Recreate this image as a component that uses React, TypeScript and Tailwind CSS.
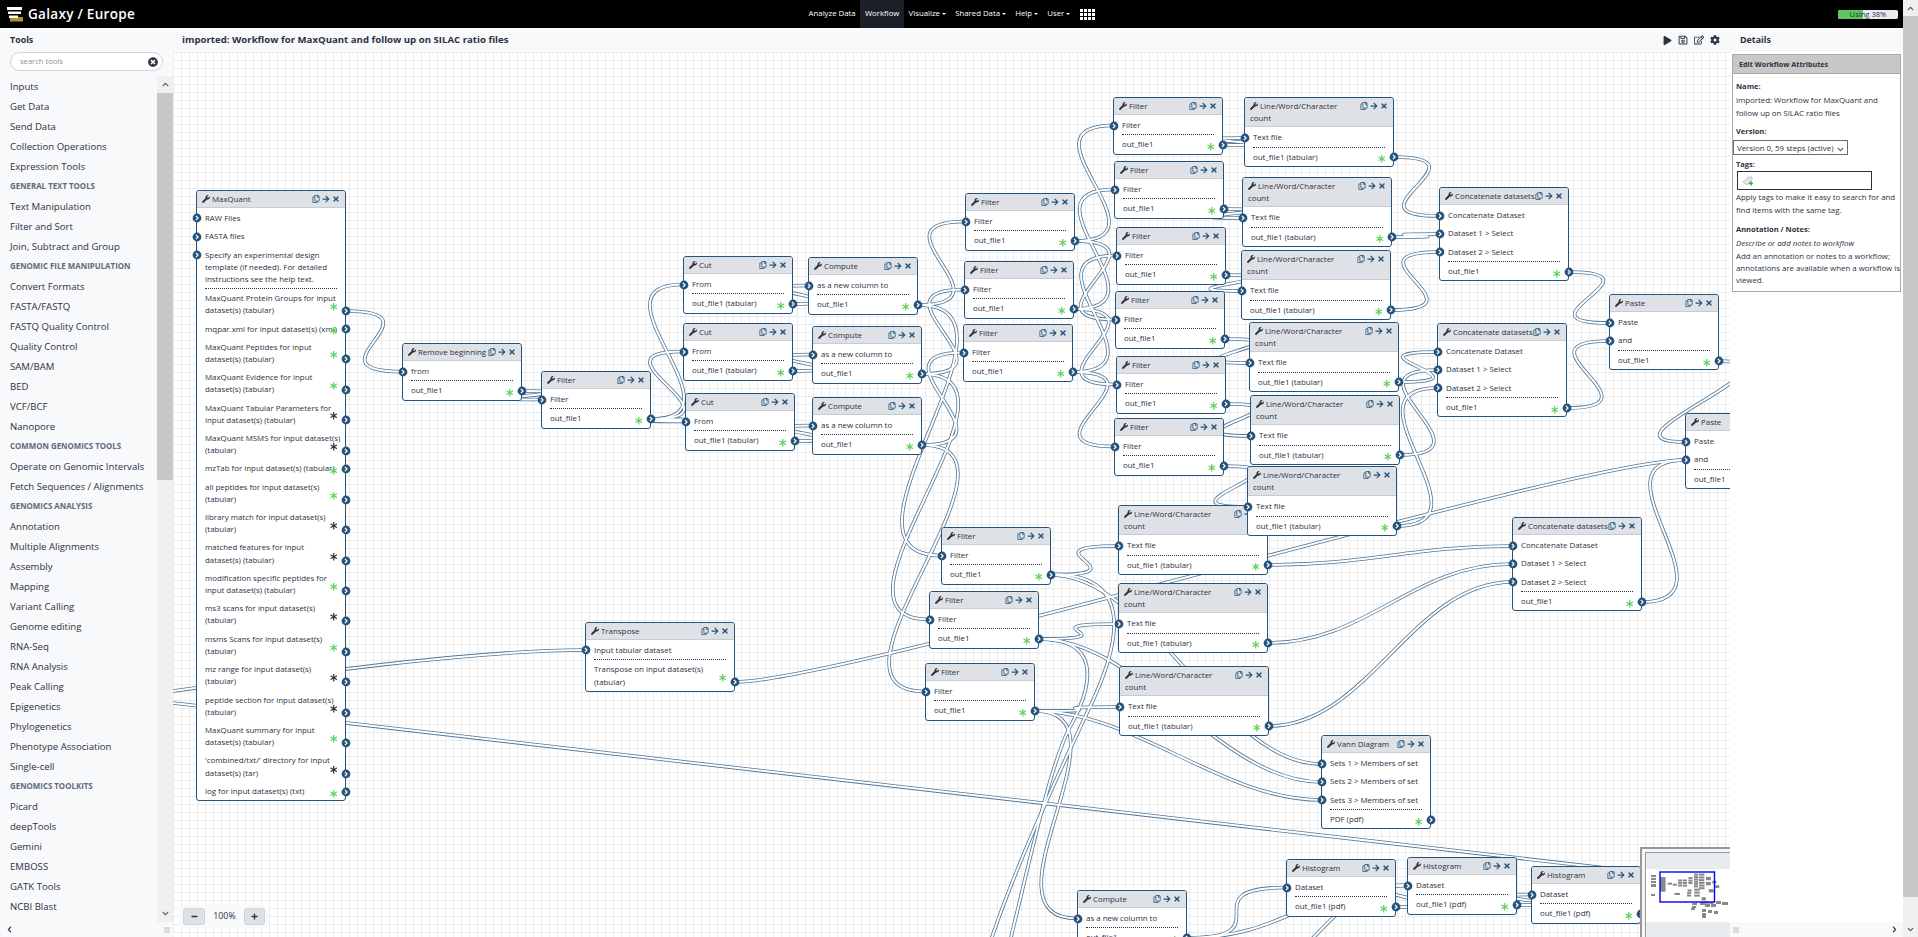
import React from 'react';
import {
  FaWrench, FaRegCopy, FaArrowRight, FaTimes, FaAsterisk, FaPlay, FaRegSave, FaRegEdit, FaCog,
  FaTimesCircle, FaChevronUp, FaChevronDown, FaChevronLeft, FaChevronRight, FaMinus, FaPlus,
} from 'react-icons/fa';

type Out = { label: string; y: number; dark?: boolean };
type Inp = { label: string; y: number };
type WfNode = { id: string; title: string; x: number; y: number; w: number; inputs: Inp[]; outputs: Out[]; minH?: number };

const single = (id: string, title: string, x: number, y: number, input: string, output: string, w = 110): WfNode => ({
  id, title, x, y, w, inputs: [{ label: input, y: y + 28.5 }], outputs: [{ label: output, y: y + 48 }],
});
const filter = (id: string, x: number, y: number) => single(id, 'Filter', x, y, 'Filter', 'out_file1');
const cut = (id: string, x: number, y: number) => single(id, 'Cut', x, y, 'From', 'out_file1 (tabular)');
const compute = (id: string, x: number, y: number) => single(id, 'Compute', x, y, 'as a new column to', 'out_file1');
const hist = (id: string, x: number, y: number) => single(id, 'Histogram', x, y, 'Dataset', 'out_file1 (pdf)');
const lineCount = (id: string, x: number, y: number): WfNode => ({
  id, title: 'Line/Word/Character\ncount', x, y, w: 150,
  inputs: [{ label: 'Text file', y: y + 41 }], outputs: [{ label: 'out_file1 (tabular)', y: y + 60 }],
});
const multi = (id: string, title: string, x: number, y: number, w: number, labels: string[], output: string): WfNode => ({
  id, title, x, y, w,
  inputs: labels.map((label, i) => ({ label, y: y + 29 + i * 18 })),
  outputs: [{ label: output, y: y + 29 + labels.length * 18 + 2 }],
});
const concat = (id: string, x: number, y: number) =>
  multi(id, 'Concatenate datasets', x, y, 130, ['Concatenate Dataset', 'Dataset 1 > Select', 'Dataset 2 > Select'], 'out_file1');

const mqOut: [string, number, boolean?][] = [
  ['MaxQuant Protein Groups for input\ndataset(s) (tabular)', 311],
  ['mqpar.xml for input dataset(s) (xml)', 329],
  ['MaxQuant Peptides for input\ndataset(s) (tabular)', 359],
  ['MaxQuant Evidence for input\ndataset(s) (tabular)', 390],
  ['MaxQuant Tabular Parameters for\ninput dataset(s) (tabular)', 420, true],
  ['MaxQuant MSMS for input dataset(s)\n(tabular)', 451, true],
  ['mzTab for input dataset(s) (tabular)', 469],
  ['all peptides for input dataset(s)\n(tabular)', 500],
  ['library match for input dataset(s)\n(tabular)', 530, true],
  ['matched features for input\ndataset(s) (tabular)', 561, true],
  ['modification specific peptides for\ninput dataset(s) (tabular)', 591],
  ['ms3 scans for input dataset(s)\n(tabular)', 621, true],
  ['msms Scans for input dataset(s)\n(tabular)', 652],
  ['mz range for input dataset(s)\n(tabular)', 682, true],
  ['peptide section for input dataset(s)\n(tabular)', 713, true],
  ['MaxQuant summary for input\ndataset(s) (tabular)', 743],
  ["'combined/txt/' directory for input\ndataset(s) (tar)", 774, true],
  ['log for input dataset(s) (txt)', 792],
];

// later entries sit on top of earlier ones
const nodes: WfNode[] = [
  {
    id: 'mq', title: 'MaxQuant', x: 196, y: 190, w: 150,
    inputs: [
      { label: 'RAW Files', y: 218 },
      { label: 'FASTA files', y: 237 },
      { label: 'Specify an experimental design\ntemplate (if needed). For detailed\ninstructions see the help text.', y: 255 },
    ],
    outputs: mqOut.map(([label, y, dark]) => ({ label, y, dark })),
  },
  single('rb', 'Remove beginning', 402, 343, 'from', 'out_file1', 120),
  filter('f0', 541, 371),
  cut('cut1', 683, 256), cut('cut2', 683, 323), cut('cut3', 685, 393),
  compute('c1', 808, 257), compute('c2', 812, 326), compute('c3', 812, 397),
  filter('fa', 965, 193), filter('fb', 964, 261), filter('fc', 963, 324),
  filter('g1', 1113, 97), filter('g2', 1114, 161), filter('g3', 1116, 227),
  filter('g4', 1115, 291), filter('g5', 1116, 356), filter('g6', 1114, 418),
  lineCount('ld', 1118, 505), lineCount('le', 1118, 583), lineCount('lf', 1119, 666),
  lineCount('l1', 1244, 97), lineCount('l2', 1242, 177), lineCount('l3', 1241, 250),
  lineCount('l4', 1249, 322), lineCount('l5', 1250, 395), lineCount('l6', 1247, 466),
  concat('cc1', 1439, 187), concat('cc2', 1437, 323), concat('cc3', 1512, 517),
  multi('p1', 'Paste', 1609, 294, 110, ['Paste', 'and'], 'out_file1'),
  multi('p2', 'Paste', 1685, 413, 110, ['Paste', 'and'], 'out_file1'),
  {
    id: 'tr', title: 'Transpose', x: 585, y: 622, w: 150,
    inputs: [{ label: 'Input tabular dataset', y: 650 }],
    outputs: [{ label: 'Transpose on input dataset(s)\n(tabular)', y: 682 }],
  },
  filter('fd', 941, 527), filter('fe', 929, 591), filter('ff', 925, 663),
  multi('venn', 'Vann Diagram', 1321, 735, 110, ['Sets 1 > Members of set', 'Sets 2 > Members of set', 'Sets 3 > Members of set'], 'PDF (pdf)'),
  compute('cb', 1077, 890),
  hist('h1', 1286, 859), hist('h2', 1407, 857), hist('h3', 1531, 866),
];

const byId = (id: string) => nodes.find((n) => n.id === id) as WfNode;

// from, output index, to, input index
const edges: [string, number, string, number][] = [
  ['mq', 0, 'rb', 0], ['rb', 0, 'f0', 0],
  ['f0', 0, 'cut1', 0], ['f0', 0, 'cut2', 0], ['f0', 0, 'cut3', 0],
  ['cut1', 0, 'c1', 0], ['cut2', 0, 'c2', 0], ['cut3', 0, 'c3', 0],
  ['c1', 0, 'fa', 0], ['c2', 0, 'fb', 0], ['c3', 0, 'fc', 0],
  ['c1', 0, 'fd', 0], ['c2', 0, 'fe', 0], ['c3', 0, 'ff', 0],
  ['fa', 0, 'g1', 0], ['fa', 0, 'g4', 0], ['fb', 0, 'g2', 0], ['fb', 0, 'g5', 0], ['fc', 0, 'g3', 0], ['fc', 0, 'g6', 0],
  ['g1', 0, 'l1', 0], ['g2', 0, 'l2', 0], ['g3', 0, 'l3', 0], ['g4', 0, 'l4', 0], ['g5', 0, 'l5', 0], ['g6', 0, 'l6', 0],
  ['l1', 0, 'cc1', 0], ['l2', 0, 'cc1', 1], ['l3', 0, 'cc1', 2],
  ['l4', 0, 'cc2', 0], ['l5', 0, 'cc2', 1], ['l6', 0, 'cc2', 2],
  ['cc1', 0, 'p1', 0], ['cc2', 0, 'p1', 1], ['p1', 0, 'p2', 0], ['cc3', 0, 'p2', 1],
  ['tr', 0, 'p2', 1],
  ['fd', 0, 'ld', 0], ['fe', 0, 'le', 0], ['ff', 0, 'lf', 0],
  ['fd', 0, 'venn', 0], ['fe', 0, 'venn', 1], ['ff', 0, 'venn', 2],
  ['ld', 0, 'cc3', 0], ['le', 0, 'cc3', 1], ['lf', 0, 'cc3', 2],
  ['ff', 0, 'cb', 0],
  ['cb', 0, 'h1', 0], ['cb', 0, 'h2', 0], ['h1', 0, 'h2', 0], ['h2', 0, 'h3', 0],
];

// connectors whose other end is off the visible canvas
const rawPaths = [
  'M173 691 C300 674 480 650 585 650',
  'M173 703 L1640 872',
  'M1051 574 C1140 574 1118 650 1087 713 C1060 770 1018 860 992 937 L970 1000',
  'M1040 639 C1098 639 1096 680 1070 727 C1050 765 1030 860 1011 937 L990 1000',
  'M1300 950 C1330 925 1350 885 1407 885',
];

const edgePath = ([from, oi, to, ii]: [string, number, string, number]) => {
  const a = byId(from);
  const b = byId(to);
  const x1 = a.x + a.w;
  const y1 = a.outputs[oi].y;
  const x2 = b.x;
  const y2 = b.inputs[ii].y;
  const cp = Math.min(Math.max(Math.abs(y2 - y1) / 2, 100), 300);
  return `M${x1} ${y1} C${x1 + cp} ${y1} ${x2 - cp} ${y2} ${x2} ${y2}`;
};

const allPaths = [...edges.map(edgePath), ...rawPaths];

const Terminal = ({ x, y }: { x: number; y: number }) => (
  <svg width="10" height="10" viewBox="0 0 10 10" className="absolute" style={{ left: x - 5, top: y - 5 }}>
    <circle cx="5" cy="5" r="4.4" fill="#25537b" />
    <path d="M3.9 2.9 L6 5 L3.9 7.1" fill="none" stroke="#fff" strokeWidth="1.3" />
  </svg>
);

const NodeCard = ({ node }: { node: WfNode }) => (
  <div
    className="absolute rounded-[3px] border border-[#25537b] bg-white text-[#2c3143] text-[7.9px] leading-[12.2px]"
    style={{ left: node.x, top: node.y, width: node.w }}
  >
    <div className="flex justify-between rounded-t-[3px] border-b border-[#c6ccd2] bg-[#dee2e6] pl-[5px] pr-[5px] pt-[2px] pb-[2px]">
      <div className="whitespace-pre">
        <FaWrench className="mr-[2px] inline-block align-[-1px] text-[8px]" />
        {node.title}
      </div>
      <div className="flex h-[12px] items-center gap-[2px] text-[#25537b]">
        <FaRegCopy className="text-[8px]" />
        <FaArrowRight className="text-[8px]" />
        <FaTimes className="text-[8px]" />
      </div>
    </div>
    <div className="pt-[1px]">
      {node.inputs.map((inp) => (
        <div key={inp.label} className="whitespace-pre px-[8px] py-[3px]">
          {inp.label}
        </div>
      ))}
      <div className="mx-[8px] border-t border-dotted border-[#2c3143]" />
      {node.outputs.map((out) => (
        <div key={out.label} className="whitespace-pre px-[8px] py-[3px]">
          {out.label}
        </div>
      ))}
    </div>
    {node.inputs.map((inp) => (
      <Terminal key={inp.label} x={-0.5} y={inp.y - node.y - 1} />
    ))}
    {node.outputs.map((out) => (
      <React.Fragment key={out.label}>
        <FaAsterisk
          className={out.dark ? 'absolute text-[7.5px] text-[#2c3143]' : 'absolute text-[7.5px] text-[#5dd05d]'}
          style={{ right: 8, top: out.y - node.y - 4 + (out.label.includes('\n') ? -5 : 1) }}
        />
        <Terminal x={node.w - 1.5} y={out.y - node.y - 1} />
      </React.Fragment>
    ))}
  </div>
);

// overview blocks for nodes outside the visible part of the canvas
const miniExtras = [
  [1651, 875, 5, 2], [1651, 878, 5, 2], [1651, 881, 5, 2], [1651, 884, 5, 3], [1651, 894, 4, 2],
  [1692, 903, 5, 2], [1692, 906, 4, 2], [1691, 908, 4, 2], [1700, 902, 5, 3], [1705, 904, 5, 3],
  [1711, 904, 5, 3], [1702, 909, 4, 3], [1708, 910, 4, 3], [1714, 911, 4, 3], [1702, 913, 4, 3],
  [1702, 916, 4, 2], [1716, 901, 5, 3], [1722, 902, 6, 3],
];

const Overview = () => (
  <div className="absolute left-[1467px] top-[795px] h-[90px] w-[90px] border-l-2 border-t-2 border-[#999] bg-[#f5f5f5] pl-[3px] pt-[3px]">
    <div className="flex h-full flex-col border-l border-t border-[#999] bg-white">
      <div className="h-[16px] bg-[#e9ecef]" />
      <svg className="h-[53px] w-full" viewBox="1646 869 84 53">
        {nodes.map((n) => (
          <rect
            key={n.id}
            x={1660 + (n.x - 196) / 27}
            y={877 + (n.y - 190) / 27}
            width={n.w / 27}
            height={Math.max((n.outputs.length * 18 + n.inputs.length * 18 + 18) / 27, 2)}
            fill="#888"
          />
        ))}
        {miniExtras.map(([x, y, w, h], i) => (
          <rect key={i} x={x} y={y} width={w} height={h} fill="#888" />
        ))}
        <rect x="1660" y="872" width="54.5" height="30" fill="none" stroke="#0000ff" strokeWidth="1.4" />
      </svg>
      <div className="flex-1 bg-[#e9ecef]" />
    </div>
  </div>
);

const sidebar: [string, boolean?][] = [
  ['Inputs'], ['Get Data'], ['Send Data'], ['Collection Operations'], ['Expression Tools'],
  ['General Text Tools', true], ['Text Manipulation'], ['Filter and Sort'], ['Join, Subtract and Group'],
  ['Genomic File Manipulation', true], ['Convert Formats'], ['FASTA/FASTQ'], ['FASTQ Quality Control'], ['Quality Control'],
  ['SAM/BAM'], ['BED'], ['VCF/BCF'], ['Nanopore'],
  ['Common Genomics Tools', true], ['Operate on Genomic Intervals'], ['Fetch Sequences / Alignments'],
  ['Genomics Analysis', true], ['Annotation'], ['Multiple Alignments'], ['Assembly'], ['Mapping'], ['Variant Calling'],
  ['Genome editing'], ['RNA-Seq'], ['RNA Analysis'], ['Peak Calling'], ['Epigenetics'], ['Phylogenetics'],
  ['Phenotype Association'], ['Single-cell'],
  ['Genomics Toolkits', true], ['Picard'], ['deepTools'], ['Gemini'], ['EMBOSS'], ['GATK Tools'], ['NCBI Blast'],
];

const Caret = () => <span className="ml-[2px] inline-block border-x-[2px] border-t-[2px] border-x-transparent border-t-white align-middle" />;

const NavItem = ({ label, menu, active }: { label: string; menu?: boolean; active?: boolean }) => (
  <div className={active ? 'flex h-full items-center bg-[#1b1f28] px-[4.6px]' : 'flex h-full items-center px-[4.6px]'}>
    {label}
    {menu && <Caret />}
  </div>
);

const Logo = () => (
  <svg width="16" height="15" viewBox="0 0 16 15">
    <rect x="3" y="10" width="13" height="4.5" fill="#a8972f" />
    <rect x="0" y="0" width="15" height="3" fill="#fff" />
    <rect x="1" y="4.5" width="13" height="2.5" fill="#fff" />
    <rect x="2" y="8.5" width="9" height="2.5" fill="#fff" />
  </svg>
);

const AppsGrid = () => (
  <div className="grid grid-cols-4 gap-[1px]">
    {Array.from({ length: 12 }).map((_, i) => (
      <div key={i} className="h-[3px] w-[3px] bg-white" />
    ))}
  </div>
);

export default function App() {
  return (
    <div className="flex h-[937px] w-[1918px] overflow-hidden bg-white font-['Open_Sans',sans-serif] text-[#2c3143]">
      <div className="flex w-[1903px] flex-col">
        <header className="flex h-[28px] items-center bg-black text-white">
          <div className="flex w-[804px] items-center pl-[7px]">
            <Logo />
            <span className="ml-[5px] text-[13.5px] font-semibold tracking-[0.3px]">Galaxy / Europe</span>
          </div>
          <nav className="flex h-full items-center text-[7.8px]">
            <NavItem label="Analyze Data" />
            <NavItem label="Workflow" active />
            <NavItem label="Visualize" menu />
            <NavItem label="Shared Data" menu />
            <NavItem label="Help" menu />
            <NavItem label="User" menu />
            <div className="ml-[5px]">
              <AppsGrid />
            </div>
          </nav>
          <div className="relative ml-auto mr-[5px] h-[9px] w-[60px] overflow-hidden rounded-[2px] bg-[#e9ecef]">
            <div className="h-full w-[42%] bg-[#5cc85c]" />
            <div className="absolute inset-0 text-center text-[7.6px] leading-[9px] text-[#2c3143]">Using 38%</div>
          </div>
        </header>

        <div className="flex min-h-0 flex-1">
          {/* tools */}
          <aside className="flex w-[173px] flex-col bg-[#f8f9fa]">
            <div className="flex h-[24px] items-center pl-[10px] text-[8.9px] font-bold">Tools</div>
            <div className="px-[10px]">
              <div className="flex h-[19px] w-[153px] items-center justify-between rounded-full border border-[#ced4da] bg-white pl-[9px] pr-[4px] text-[7.6px] text-[#8a9099]">
                search tools
                <FaTimesCircle className="text-[10px] text-[#2c3143]" />
              </div>
            </div>
            <div className="mt-[5px] flex min-h-0 flex-1">
              <div className="flex-1 overflow-hidden pt-[1px]">
                {sidebar.map(([label, section]) => (
                  <div
                    key={label}
                    className={
                      section
                        ? 'flex h-[20px] items-center whitespace-nowrap pl-[10px] text-[7.9px] font-bold uppercase text-[#5f6a7d]'
                        : 'flex h-[20px] items-center whitespace-nowrap pl-[10px] text-[9.6px]'
                    }
                  >
                    {label}
                  </div>
                ))}
              </div>
              <div className="flex w-[16px] flex-col bg-[#f0f0f0]">
                <div className="flex h-[17px] items-center justify-center text-[#505050]">
                  <FaChevronUp className="text-[7px]" />
                </div>
                <div className="h-[387px] bg-[#c8c8c8]" />
                <div className="flex-1" />
                <div className="flex h-[17px] items-center justify-center text-[#505050]">
                  <FaChevronDown className="text-[7px]" />
                </div>
              </div>
            </div>
            <div className="flex h-[15px] items-center justify-between pl-[6px] pr-[3px]">
              <FaChevronLeft className="text-[7px]" />
              <div className="h-[6px] w-[6px] bg-[#dcdcdc]" />
            </div>
          </aside>

          {/* workflow canvas */}
          <main className="flex w-[1557px] flex-col">
            <div className="flex h-[24px] items-center justify-between bg-[#f8f9fa] pl-[9px] pr-[10px]">
              <div className="text-[9.65px] font-bold">imported: Workflow for MaxQuant and follow up on SILAC ratio files</div>
              <div className="flex items-center gap-[6px] text-[10px]">
                <FaPlay className="text-[9px]" />
                <FaRegSave />
                <FaRegEdit />
                <FaCog />
              </div>
            </div>
            <div className="relative flex-1 overflow-hidden bg-white bg-[linear-gradient(to_right,#ececec_1px,transparent_1px),linear-gradient(to_bottom,#ececec_1px,transparent_1px)] bg-[size:8px_8px]">
              <div className="absolute left-[-173px] top-[-52px]">
                <svg className="absolute left-0 top-0" width="1918" height="1000" fill="none">
                  {allPaths.map((d, i) => (
                    <path key={`o${i}`} d={d} stroke="#4f7698" strokeWidth="3.6" />
                  ))}
                  {allPaths.map((d, i) => (
                    <path key={`i${i}`} d={d} stroke="#fff" strokeWidth="2" />
                  ))}
                </svg>
                {nodes.map((n) => (
                  <NodeCard key={n.id} node={n} />
                ))}
              </div>
              <div className="absolute bottom-[9px] left-[7px] flex h-[23px] w-[88px] items-center justify-between rounded-[3px] bg-[#f8f9fa] px-[3px] text-[8.8px]">
                <div className="flex h-[17px] w-[22px] items-center justify-center rounded-[3px] border border-[#ced4da] bg-[#dee2e6]">
                  <FaMinus className="text-[7px]" />
                </div>
                100%
                <div className="flex h-[17px] w-[21px] items-center justify-center rounded-[3px] border border-[#ced4da] bg-[#dee2e6]">
                  <FaPlus className="text-[7px]" />
                </div>
              </div>
              <Overview />
            </div>
          </main>

          {/* details */}
          <aside className="flex w-[173px] flex-col bg-white">
            <div className="flex h-[24px] items-center bg-[#f8f9fa] pl-[10px] text-[8.9px] font-bold">Details</div>
            <div className="flex-1 pl-[2px] pr-[2px] pt-[2px]">
              <div className="h-[238px] border border-[#a8a8a8] text-[7.85px] leading-[12.3px]">
                <div className="flex h-[19px] items-center border-b border-[#a8a8a8] bg-[#c8c8c8] pl-[6px] text-[7.2px] font-bold">Edit Workflow Attributes</div>
                <div className="pl-[3px] pr-[2px]">
                  <div className="mt-[6px] text-[7.5px] font-bold">Name:</div>
                  <div className="mt-[2px]">
                    imported: Workflow for MaxQuant and
                    <br />
                    follow up on SILAC ratio files
                  </div>
                  <div className="mt-[6px] text-[7.5px] font-bold">Version:</div>
                  <div className="relative ml-[-3px] mt-[3px] flex h-[15px] w-[115px] items-center whitespace-nowrap border border-[#6c6c6c] bg-white pl-[3px]">
                    Version 0, 59 steps (active)
                    <FaChevronDown className="absolute right-[3px] top-[5px] text-[7px] text-[#555]" />
                  </div>
                  <div className="mt-[3px] text-[7.5px] font-bold">Tags:</div>
                  <div className="ml-[1px] mt-[1px] flex h-[19px] w-[135px] items-center border border-[#2c3143] pl-[4px]">
                    <svg width="12" height="10" viewBox="0 0 12 10">
                      <path d="M1 6 L6 1 L10 1 L10 4 L5 9 Z" fill="#e4e4e4" stroke="#bbb" strokeWidth="0.8" />
                      <path d="M7 7.5 H11 M9 5.5 V9.5" stroke="#3fa63f" strokeWidth="1.5" />
                    </svg>
                  </div>
                  <div className="mt-[1px] whitespace-nowrap">
                    Apply tags to make it easy to search for and
                    <br />
                    find items with the same tag.
                  </div>
                  <div className="mt-[7px] text-[7.5px] font-bold">Annotation / Notes:</div>
                  <div className="mt-[2px] italic">Describe or add notes to workflow</div>
                  <div className="whitespace-nowrap">
                    Add an annotation or notes to a workflow;
                    <br />
                    annotations are available when a workflow is
                    <br />
                    viewed.
                  </div>
                </div>
              </div>
            </div>
            <div className="flex h-[15px] items-center justify-between bg-[#f8f9fa] pl-[3px] pr-[5px]">
              <div className="h-[6px] w-[6px] bg-[#dcdcdc]" />
              <FaChevronRight className="text-[7px]" />
            </div>
          </aside>
        </div>
      </div>

      {/* page scrollbar */}
      <div className="flex w-[15px] flex-col bg-[#f0f0f0]">
        <div className="flex h-[16px] items-center justify-center text-[#505050]">
          <FaChevronUp className="text-[7px]" />
        </div>
        <div className="h-[881px] bg-[#c8c8c8]" />
        <div className="flex-1" />
        <div className="flex h-[16px] items-center justify-center text-[#505050]">
          <FaChevronDown className="text-[7px]" />
        </div>
      </div>
    </div>
  );
}
